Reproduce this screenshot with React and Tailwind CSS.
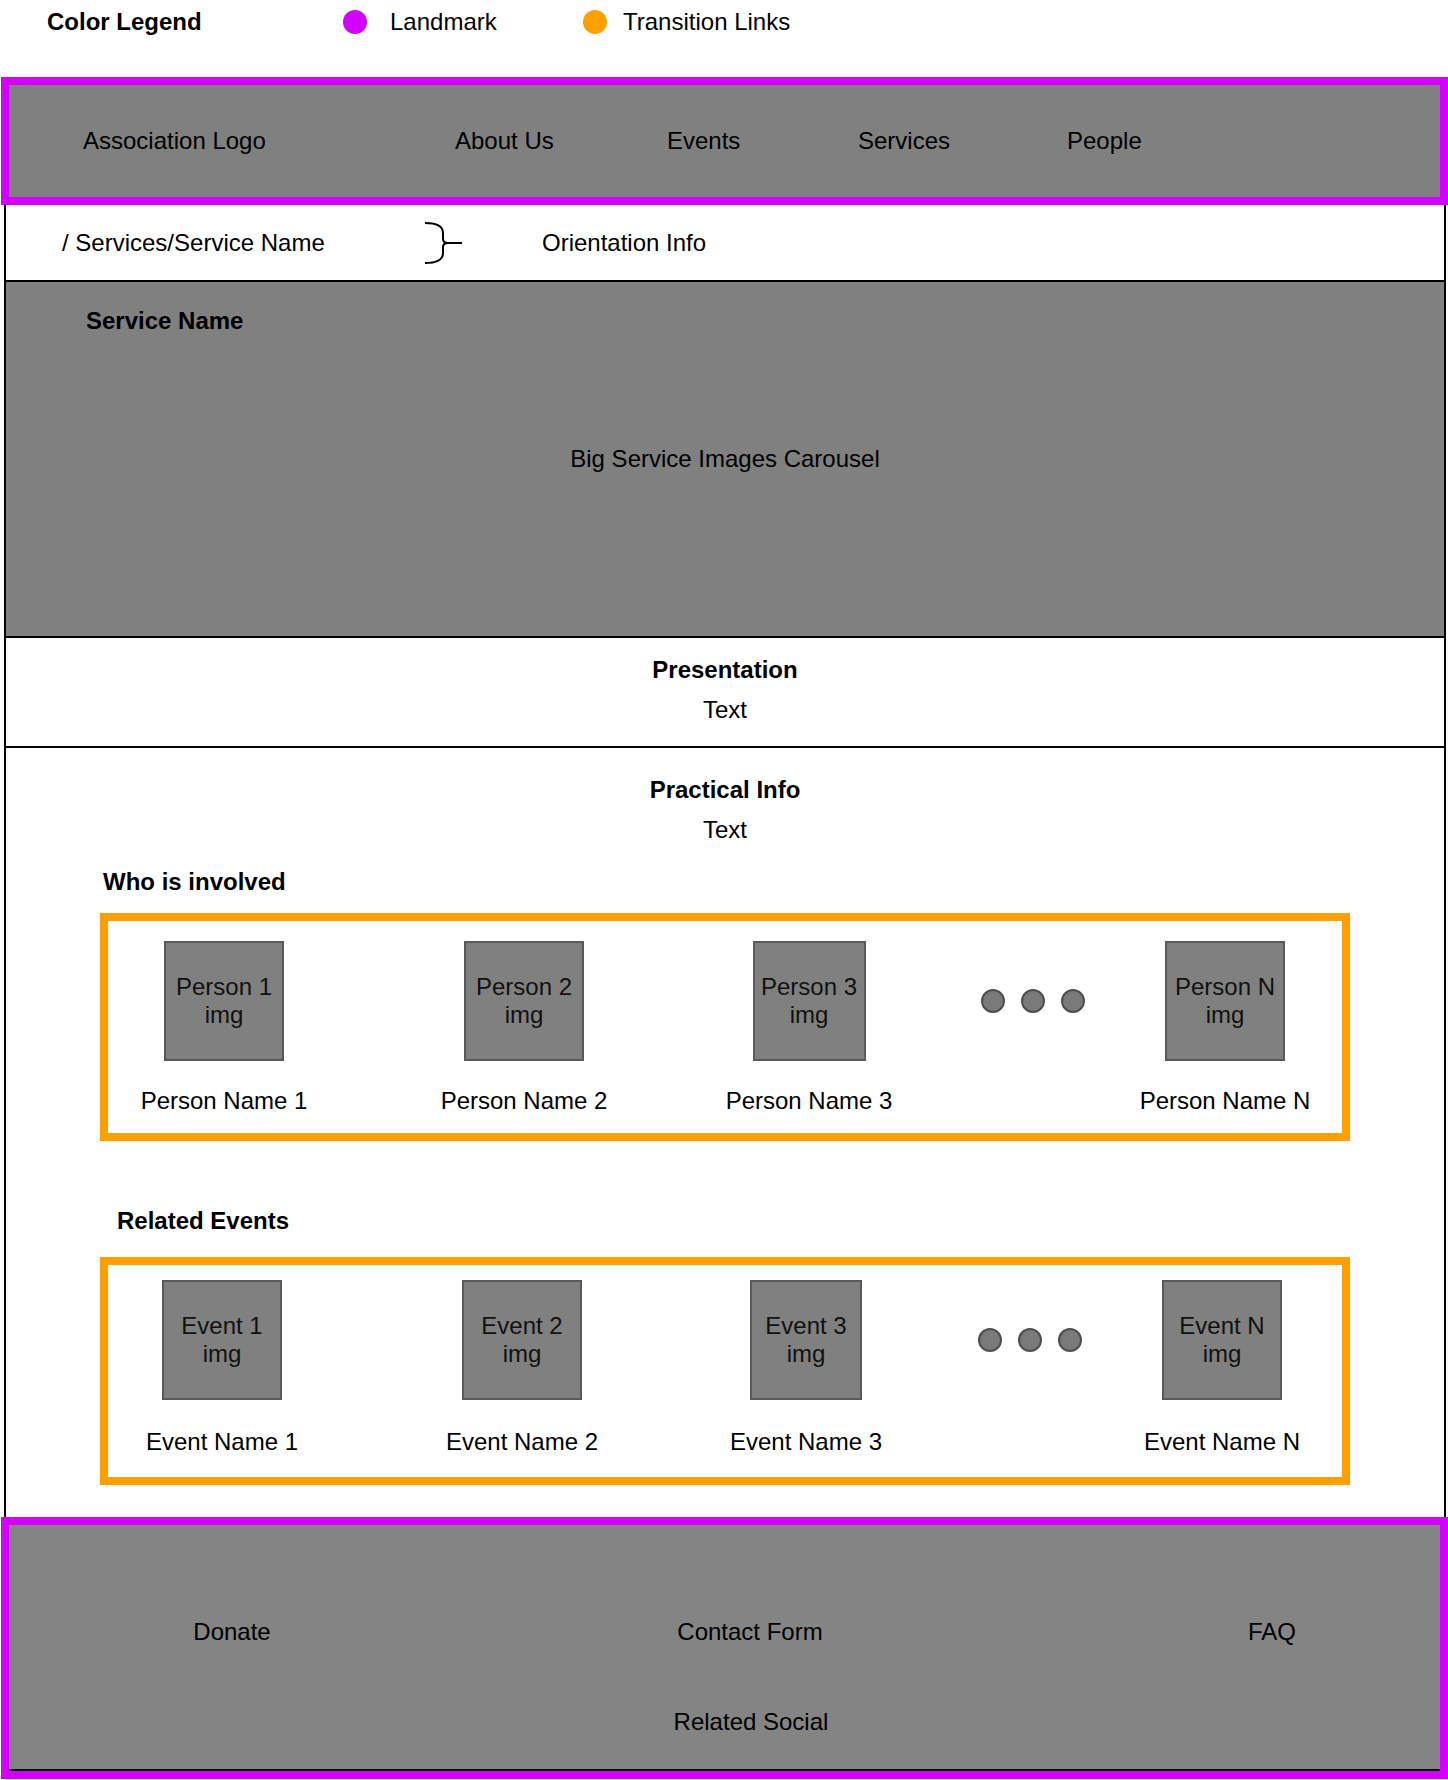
import React from "react";

const FONT = { fontFamily: '"Liberation Sans", Arial, Helvetica, sans-serif' };

function ImgBox({ label, w = "w-[120px]" }) {
  return (
    <div className={`${w} h-[120px] bg-[#808080] border-2 border-[#5a5a5a] flex flex-col items-center justify-center text-[24px] leading-[28px] text-[#111] text-center`}>
      <span>{label}</span>
      <span>img</span>
    </div>
  );
}

function Item({ label, name, ml, w, gap = "mt-[26px]" }) {
  return (
    <div className={`${ml} w-[200px] shrink-0 flex flex-col items-center`}>
      <ImgBox label={label} w={w} />
      <div className={`${gap} text-[24px] leading-[28px] text-black whitespace-nowrap`}>{name}</div>
    </div>
  );
}

function Dots({ ml }) {
  return (
    <div className={`${ml} w-[120px] h-[120px] shrink-0 flex items-center justify-center gap-[16px]`}>
      <div className="w-[24px] h-[24px] rounded-full bg-[#7a7a7a] border-2 border-[#4f4f4f]" />
      <div className="w-[24px] h-[24px] rounded-full bg-[#7a7a7a] border-2 border-[#4f4f4f]" />
      <div className="w-[24px] h-[24px] rounded-full bg-[#7a7a7a] border-2 border-[#4f4f4f]" />
    </div>
  );
}

function Brace() {
  return (
    <svg width="38" height="44" viewBox="0 0 38 44" className="shrink-0">
      <path
        d="M1 2 Q19 2 19 12 L19 18 Q19 22 24 22 L38 22 M24 22 Q19 22 19 26 L19 32 Q19 42 1 42"
        fill="none"
        stroke="#000"
        strokeWidth="2"
      />
    </svg>
  );
}

export default function App() {
  return (
    <div style={FONT} className="w-[1448px] h-[1780px] bg-white text-black text-[24px] leading-[28px]">
      {/* Legend */}
      <div className="h-[77px] flex items-start pt-[8px] pl-[47px]">
        <span className="font-bold w-[296px]">Color Legend</span>
        <span className="w-[24px] h-[24px] rounded-full bg-[#d400ff] mt-[2px]" />
        <span className="ml-[23px] w-[193px]">Landmark</span>
        <span className="w-[24px] h-[24px] rounded-full bg-[#ffa000] mt-[2px]" />
        <span className="ml-[16px]">Transition Links</span>
      </div>

      {/* Header */}
      <div className="ml-[1px] w-[1447px] h-[128px] border-[8px] border-[#d400ff] bg-[#808080] flex items-center pl-[74px]">
        <span className="w-[372px]">Association Logo</span>
        <span className="w-[212px]">About Us</span>
        <span className="w-[191px]">Events</span>
        <span className="w-[209px]">Services</span>
        <span>People</span>
      </div>

      {/* Frame */}
      <div className="ml-[4px] w-[1442px] border-x-2 border-black">
        {/* Breadcrumb */}
        <div className="h-[77px] border-b-2 border-black flex items-center pl-[56px]">
          <span className="w-[362px] whitespace-nowrap">/ Services/Service Name</span>
          <Brace />
          <span className="ml-[80px]">Orientation Info</span>
        </div>

        {/* Hero */}
        <div className="h-[356px] border-b-2 border-black bg-[#808080] grid">
          <div className="col-start-1 row-start-1 self-start pt-[25px] pl-[80px] font-bold">Service Name</div>
          <div className="col-start-1 row-start-1 self-center justify-self-center">Big Service Images Carousel</div>
        </div>

        {/* Presentation */}
        <div className="h-[110px] border-b-2 border-black flex flex-col items-center pt-[18px]">
          <div className="font-bold">Presentation</div>
          <div className="mt-[12px]">Text</div>
        </div>

        {/* Practical */}
        <div className="h-[769px] flex flex-col pt-[28px]">
          <div className="self-center font-bold">Practical Info</div>
          <div className="self-center mt-[12px]">Text</div>
          <div className="ml-[97px] mt-[24px] font-bold">Who is involved</div>

          <div className="ml-[94px] mt-[17px] w-[1250px] h-[228px] border-[8px] border-[#ffa000] flex items-start pt-[20px]">
            <Item ml="ml-[16px]" label="Person 1" name="Person Name 1" />
            <Item ml="ml-[100px]" label="Person 2" name="Person Name 2" />
            <Item ml="ml-[85px]" label="Person 3" name="Person Name 3" w="w-[113px]" />
            <Dots ml="ml-[64px]" />
            <Item ml="ml-[32px]" label="Person N" name="Person Name N" />
          </div>

          <div className="ml-[111px] mt-[66px] font-bold">Related Events</div>

          <div className="ml-[94px] mt-[22px] w-[1250px] h-[228px] border-[8px] border-[#ffa000] flex items-start pt-[15px]">
            <Item ml="ml-[14px]" label="Event 1" name="Event Name 1" gap="mt-[28px]" />
            <Item ml="ml-[100px]" label="Event 2" name="Event Name 2" gap="mt-[28px]" />
            <Item ml="ml-[84px]" label="Event 3" name="Event Name 3" w="w-[112px]" gap="mt-[28px]" />
            <Dots ml="ml-[64px]" />
            <Item ml="ml-[32px]" label="Event N" name="Event Name N" gap="mt-[28px]" />
          </div>
        </div>
      </div>

      {/* Footer */}
      <div className="ml-[1px] w-[1447px] h-[262px] border-[8px] border-[#d400ff]">
        <div className="h-full bg-[#848484] border-b-2 border-black flex flex-col pt-[93px]">
          <div className="flex">
            <span className="ml-[73px] w-[300px] text-center">Donate</span>
            <span className="ml-[218px] w-[300px] text-center">Contact Form</span>
            <span className="ml-[222px] w-[300px] text-center">FAQ</span>
          </div>
          <div className="flex mt-[62px]">
            <span className="ml-[592px] w-[300px] text-center">Related Social</span>
          </div>
        </div>
      </div>
    </div>
  );
}
